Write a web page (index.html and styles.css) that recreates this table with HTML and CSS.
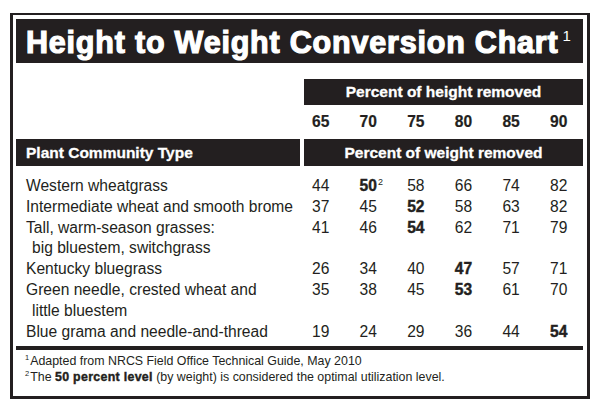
FILE: index.html
```html
<!DOCTYPE html>
<html lang="en">
<head>
<meta charset="utf-8">
<title>Height to Weight Conversion Chart</title>
<link rel="stylesheet" href="styles.css">
</head>
<body>
<div class="chart">
  <div class="title-bar"><h1 class="title">Height to Weight Conversion Chart<sup class="title-sup">1</sup></h1></div>

  <div class="head-row head-top">
    <div class="spacer"></div>
    <div class="bar bar-right">Percent of height removed</div>
  </div>

  <div class="head-row head-nums">
    <div class="spacer"></div>
    <div class="nums nums-head">
      <span class="cell">65</span><span class="cell">70</span><span class="cell">75</span><span class="cell">80</span><span class="cell">85</span><span class="cell">90</span>
    </div>
  </div>

  <div class="head-row head-bottom">
    <div class="bar bar-left">Plant Community Type</div>
    <div class="bar bar-right">Percent of weight removed</div>
  </div>

  <div class="rows">
    <div class="row">
      <div class="name">Western wheatgrass</div>
      <div class="nums"><span class="cell">44</span><span class="cell"><b>50</b><sup class="fn">2</sup></span><span class="cell">58</span><span class="cell">66</span><span class="cell">74</span><span class="cell">82</span></div>
    </div>
    <div class="row">
      <div class="name">Intermediate wheat and smooth brome</div>
      <div class="nums"><span class="cell">37</span><span class="cell">45</span><span class="cell"><b>52</b></span><span class="cell">58</span><span class="cell">63</span><span class="cell">82</span></div>
    </div>
    <div class="row">
      <div class="name">Tall, warm-season grasses:<span class="indent">big bluestem, switchgrass</span></div>
      <div class="nums"><span class="cell">41</span><span class="cell">46</span><span class="cell"><b>54</b></span><span class="cell">62</span><span class="cell">71</span><span class="cell">79</span></div>
    </div>
    <div class="row">
      <div class="name">Kentucky bluegrass</div>
      <div class="nums"><span class="cell">26</span><span class="cell">34</span><span class="cell">40</span><span class="cell"><b>47</b></span><span class="cell">57</span><span class="cell">71</span></div>
    </div>
    <div class="row">
      <div class="name">Green needle, crested wheat and<span class="indent">little bluestem</span></div>
      <div class="nums"><span class="cell">35</span><span class="cell">38</span><span class="cell">45</span><span class="cell"><b>53</b></span><span class="cell">61</span><span class="cell">70</span></div>
    </div>
    <div class="row">
      <div class="name">Blue grama and needle-and-thread</div>
      <div class="nums"><span class="cell">19</span><span class="cell">24</span><span class="cell">29</span><span class="cell">36</span><span class="cell">44</span><span class="cell"><b>54</b></span></div>
    </div>
  </div>

  <div class="rule"></div>

  <div class="notes">
    <p class="note"><sup class="note-sup">1</sup>Adapted from NRCS Field Office Technical Guide, May 2010</p>
    <p class="note"><sup class="note-sup">2</sup>The <b class="heavy">50 percent level</b> (by weight) is considered the optimal utilization level.</p>
  </div>
</div>
</body>
</html>
```

FILE: styles.css
```css
* { box-sizing: border-box; }

html, body {
  margin: 0;
  padding: 0;
  background: #ffffff;
}

body {
  font-family: "Liberation Sans", Arial, Helvetica, sans-serif;
  color: #231f20;
}

.chart {
  margin: 13px 0 0 10px;
  width: 580px;
  height: 386px;
  border-style: solid;
  border-color: #231f20;
  border-width: 2px 3px 3px 3px;
  padding: 4px 4px 0 3px;
}

.title-bar {
  background: #231f20;
  height: 44px;
  display: flex;
  align-items: center;
  padding: 2px 0 0 10px;
}

.title {
  margin: 0;
  color: #ffffff;
  font-size: 30.5px;
  font-weight: bold;
  letter-spacing: 0.8px;
  -webkit-text-stroke: 1.2px #ffffff;
  line-height: 1;
  white-space: nowrap;
}

.title-sup {
  font-size: 15px;
  font-weight: normal;
  -webkit-text-stroke: 0;
  letter-spacing: 0;
  vertical-align: 12px;
  margin-left: 4px;
}

.head-row {
  display: flex;
}

.head-top {
  margin-top: 16px;
}

.spacer {
  width: 288px;
  flex: none;
}

.bar {
  background: #231f20;
  color: #ffffff;
  font-weight: bold;
  font-size: 15.5px;
  -webkit-text-stroke: 0.3px #ffffff;
  display: flex;
  align-items: center;
}

.bar-right {
  flex: 1;
  justify-content: center;
}

.head-top .bar {
  height: 26px;
}

.head-bottom .bar {
  height: 27px;
}

.bar-left {
  width: 284px;
  margin-right: 4px;
  padding-left: 10px;
  flex: none;
}

.head-nums {
  height: 34px;
  align-items: center;
}

.nums {
  display: flex;
  padding-left: 8px;
  font-size: 15.6px;
}

.nums-head {
  font-weight: bold;
  -webkit-text-stroke: 0.2px #231f20;
}

.cell {
  width: 47.6px;
  flex: none;
  white-space: nowrap;
}

.rows {
  margin-top: 10px;
  font-size: 15.6px;
  line-height: 20.8px;
}

.row {
  display: flex;
  align-items: flex-start;
}

.name {
  width: 288px;
  flex: none;
  padding-left: 10px;
}

.indent {
  display: block;
  padding-left: 6px;
}

.fn {
  font-size: 9px;
  vertical-align: 6px;
  line-height: 0;
  margin-left: 1px;
}

b {
  font-weight: bold;
  -webkit-text-stroke: 0.4px #231f20;
}

.rule {
  margin-top: 4px;
  height: 4px;
  background: #231f20;
}

.notes {
  padding: 4px 0 0 9px;
  font-size: 12.4px;
  line-height: 15.5px;
}

.note {
  margin: 0;
}

.heavy {
  letter-spacing: 0.3px;
}

.note-sup {
  font-size: 7.5px;
  vertical-align: 5px;
  line-height: 0;
  margin-right: 1px;
}
```
